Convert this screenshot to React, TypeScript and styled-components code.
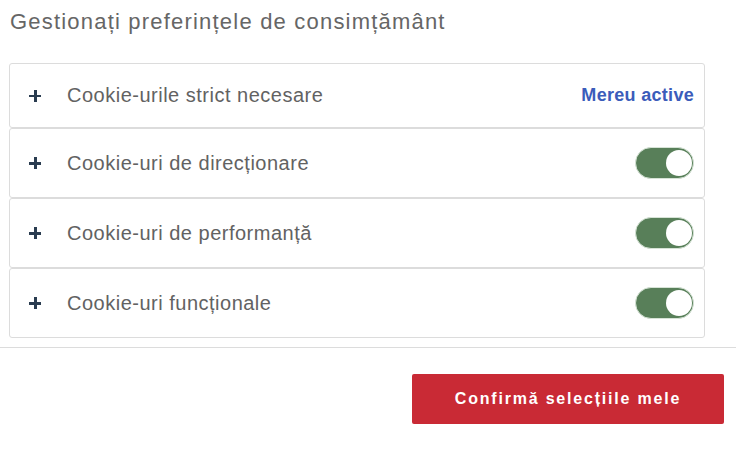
import styled, { createGlobalStyle } from 'styled-components';

const GlobalStyle = createGlobalStyle`
  body {
    margin: 0;
    background: #ffffff;
    font-family: "Liberation Sans", Arial, sans-serif;
  }
`;

const Panel = styled.div`
  width: 736px;
  height: 450px;
  display: flex;
  flex-direction: column;
`;

const Title = styled.h3`
  margin: 10px 0 0 10px;
  font-size: 22px;
  line-height: 24px;
  font-weight: 400;
  letter-spacing: 1.2px;
  color: #666666;
`;

const List = styled.div`
  display: flex;
  flex-direction: column;
  margin: 29px 31px 0 9px;
`;

const Item = styled.div`
  display: flex;
  align-items: center;
  padding: 18px 10px 18px 19px;
  border: 1px solid #dcdcdc;
  border-radius: 3px;
`;

const Plus = styled.span`
  position: relative;
  width: 12px;
  height: 12px;
  margin-right: 26px;
  flex: none;
  &::before,
  &::after {
    content: '';
    position: absolute;
    background: #2a3c50;
  }
  &::before {
    left: 0;
    top: 5px;
    width: 12px;
    height: 2.5px;
  }
  &::after {
    left: 5px;
    top: 0;
    width: 2.5px;
    height: 12px;
  }
`;

const Label = styled.span`
  flex: 1;
  font-size: 20px;
  line-height: 27px;
  letter-spacing: 0.5px;
  color: #626262;
`;

const Always = styled.span`
  font-size: 18px;
  line-height: 27px;
  font-weight: 700;
  letter-spacing: 0.3px;
  color: #3b5cba;
`;

const Toggle = styled.span<{ $on: boolean }>`
  position: relative;
  width: 59px;
  height: 32px;
  flex: none;
  box-sizing: border-box;
  border-radius: 16px;
  border: 1px solid #d6e3d6;
  background: ${({ $on }) => ($on ? '#587f59' : '#cccccc')};
  &::after {
    content: '';
    position: absolute;
    top: 2px;
    right: ${({ $on }) => ($on ? '1px' : 'auto')};
    left: ${({ $on }) => ($on ? 'auto' : '1px')};
    width: 26px;
    height: 26px;
    border-radius: 50%;
    background: #ffffff;
  }
`;

const Divider = styled.hr`
  margin: 9px 0 0;
  border: none;
  border-top: 1px solid #dcdcdc;
`;

const Footer = styled.div`
  display: flex;
  justify-content: flex-end;
  padding: 26px 12px 0;
`;

const ConfirmButton = styled.button`
  width: 312px;
  height: 50px;
  border: none;
  border-radius: 2px;
  background: #c92a35;
  color: #ffffff;
  font-family: "Liberation Sans", Arial, sans-serif;
  font-size: 16px;
  font-weight: 700;
  letter-spacing: 1.8px;
  cursor: pointer;
`;

const categories = [
  { name: 'Cookie-urile strict necesare', always: true },
  { name: 'Cookie-uri de direcționare', always: false },
  { name: 'Cookie-uri de performanță', always: false },
  { name: 'Cookie-uri funcționale', always: false },
];

export default function App() {
  return (
    <Panel>
      <GlobalStyle />
      <Title>Gestionați preferințele de consimțământ</Title>
      <List>
        {categories.map((c) => (
          <Item key={c.name}>
            <Plus />
            <Label>{c.name}</Label>
            {c.always ? <Always>Mereu active</Always> : <Toggle $on />}
          </Item>
        ))}
      </List>
      <Divider />
      <Footer>
        <ConfirmButton>Confirmă selecțiile mele</ConfirmButton>
      </Footer>
    </Panel>
  );
}
